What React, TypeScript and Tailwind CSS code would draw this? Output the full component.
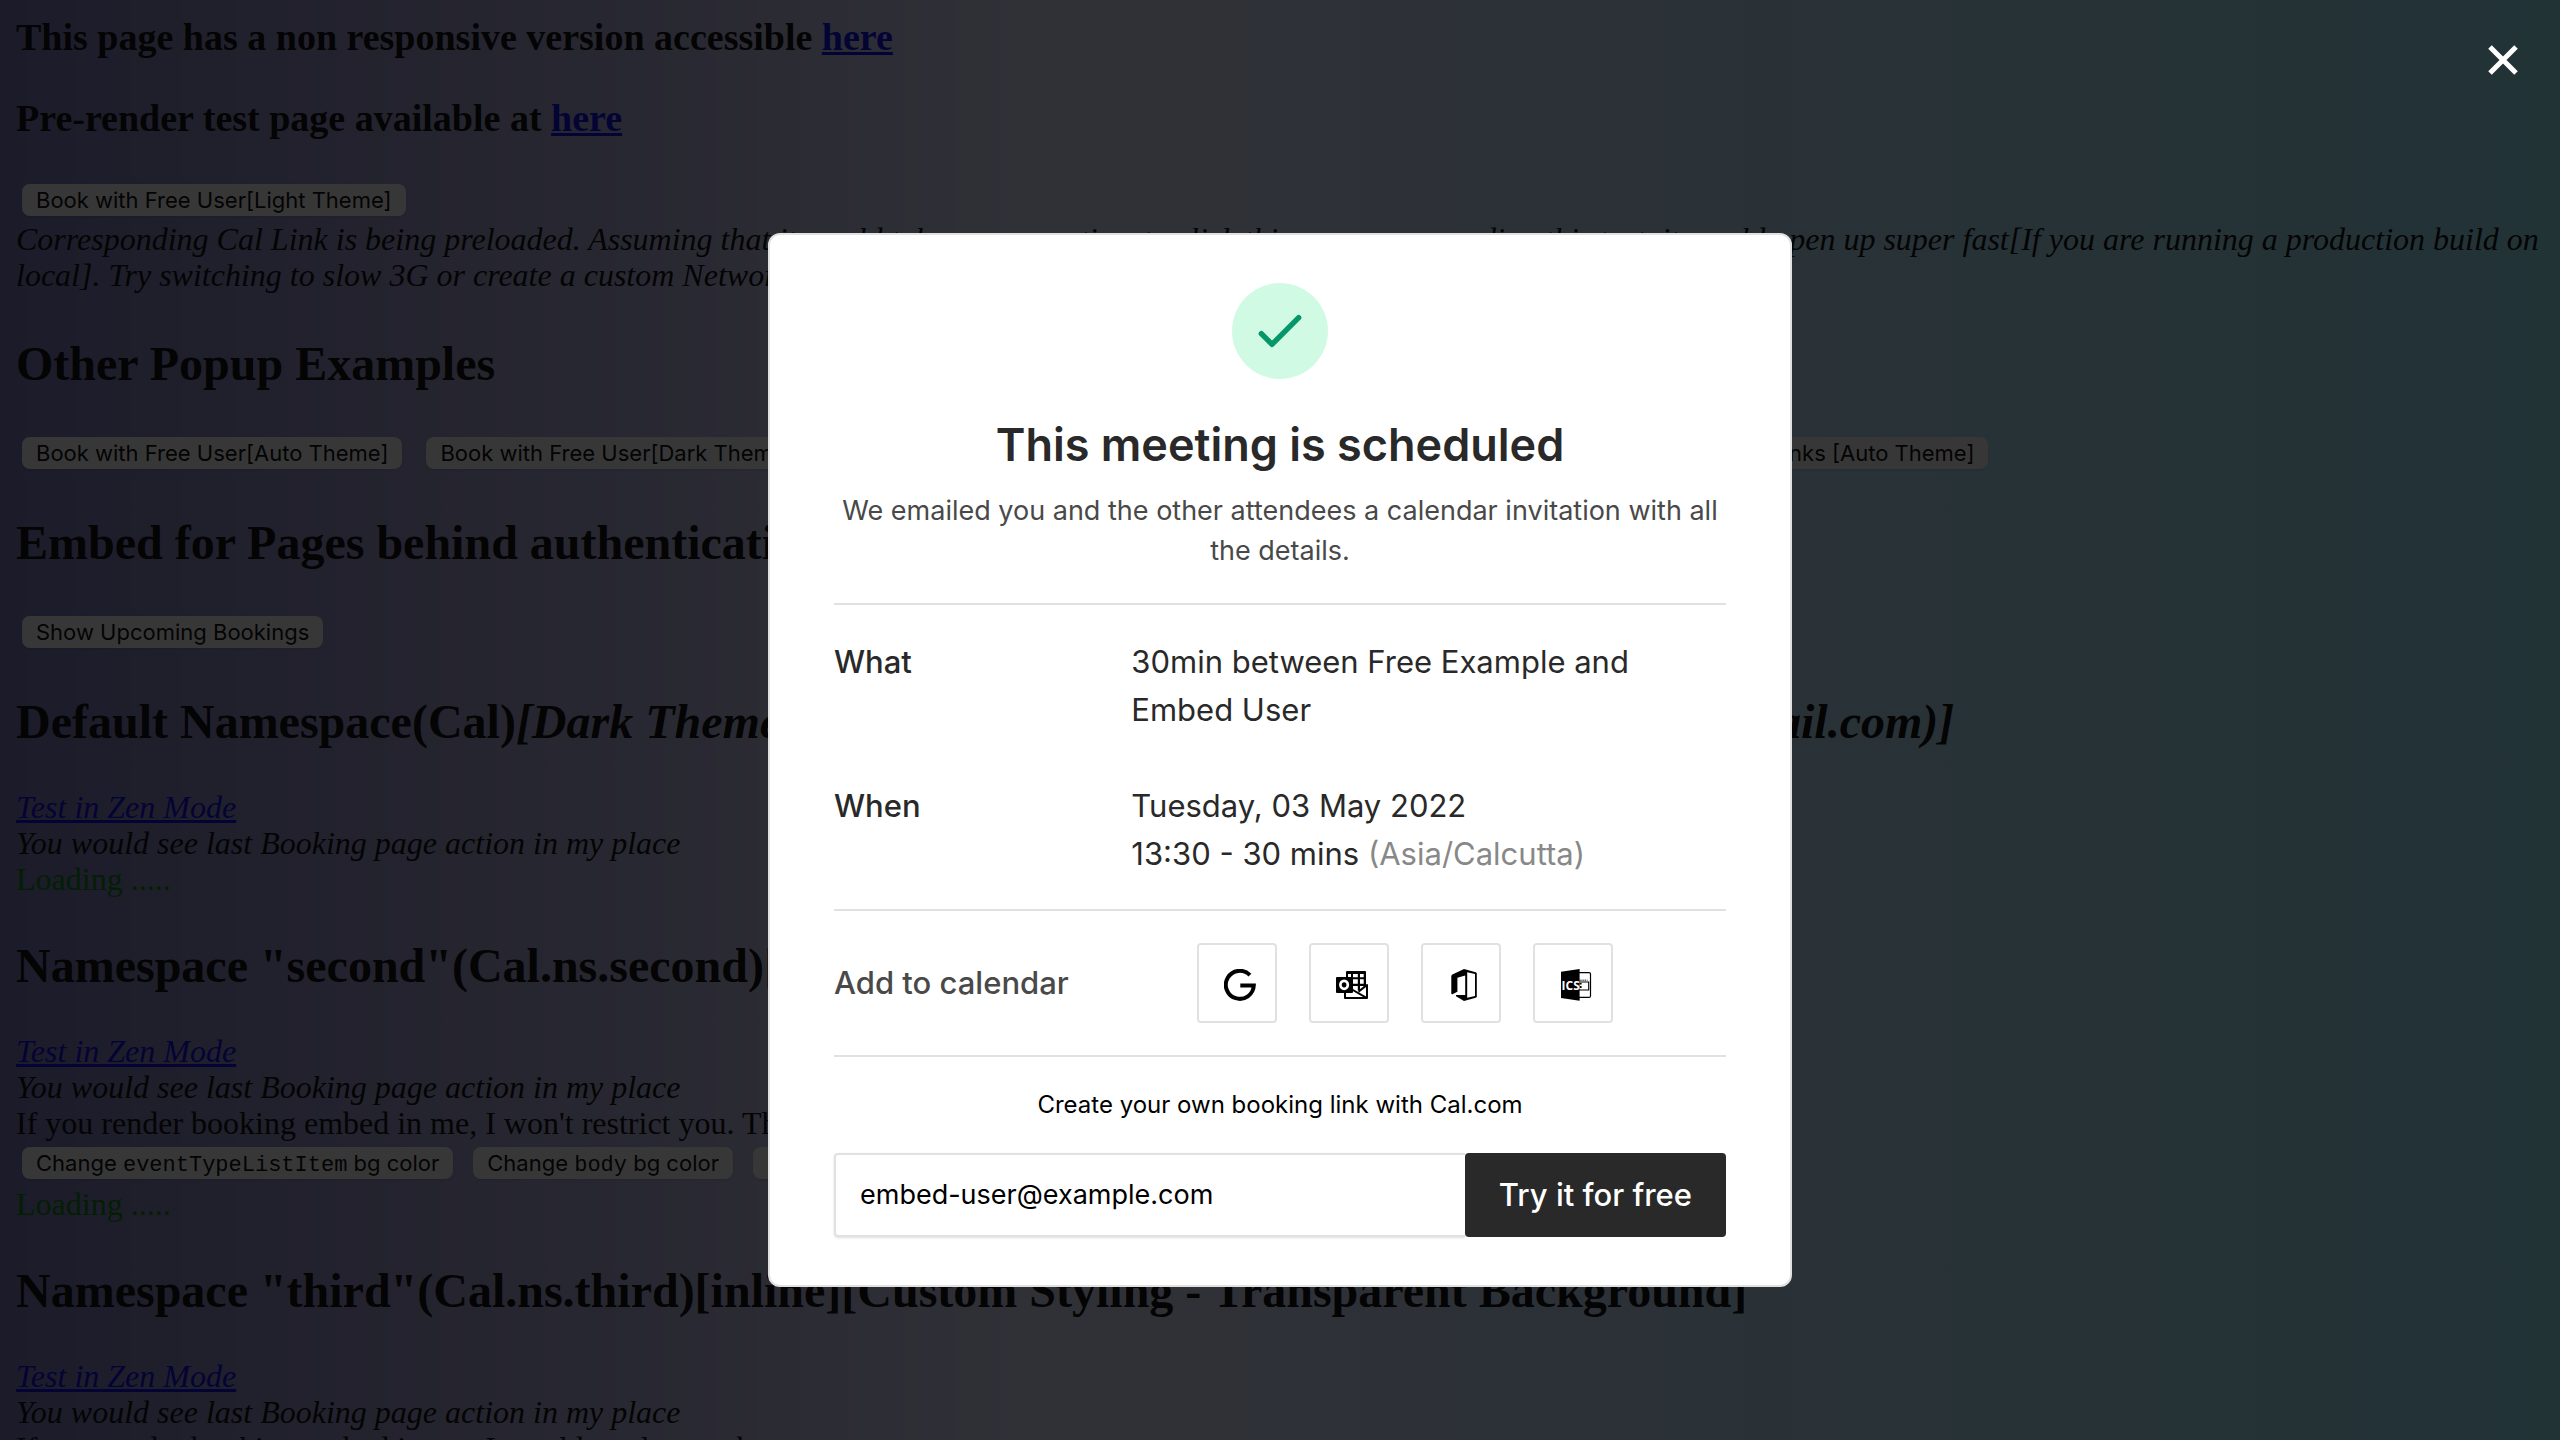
import React, { type ReactNode } from "react";

const ui = "font-['Inter',sans-serif]";

function PageButton({ children }: { children: ReactNode }) {
  return (
    <button
      type="button"
      className={`${ui} h-8 shrink-0 rounded-lg bg-white px-3.5 text-[22px] leading-8 whitespace-nowrap text-black shadow-sm`}
    >
      {children}
    </button>
  );
}

function ButtonRow({ children }: { children: ReactNode }) {
  return <div className="flex gap-5 overflow-hidden px-1.5 pt-1.5 pb-[7px]">{children}</div>;
}

function Mono({ children }: { children: ReactNode }) {
  return <code className="font-['Liberation_Mono',monospace] text-[22px]">{children}</code>;
}

function PageLink({ children }: { children: ReactNode }) {
  return (
    <a href="#" className="text-[#0000ee] underline">
      {children}
    </a>
  );
}

function Heading({ children }: { children: ReactNode }) {
  return <h2 className="my-10 text-[48px] leading-[54px] font-bold whitespace-nowrap">{children}</h2>;
}

function NamespaceIntro() {
  return (
    <>
      <div className="italic">
        <PageLink>Test in Zen Mode</PageLink>
      </div>
      <div className="italic">You would see last Booking page action in my place</div>
    </>
  );
}

function Loading() {
  return <div className="pb-0.5 text-[#008000]">Loading .....</div>;
}

function GoogleIcon() {
  return (
    <svg viewBox="0 0 32 32" className="size-8" aria-hidden="true">
      <path d="M25.9 6.1A14 14 0 1 0 29.8 16.5H16.3" fill="none" stroke="black" strokeWidth="4" />
    </svg>
  );
}

function OutlookIcon() {
  return (
    <svg viewBox="0 0 32 32" className="size-8" aria-hidden="true">
      <rect x="10" y="2" width="20" height="22" rx="1" />
      <g fill="white">
        <path d="M12 5h3v3h-3zM17 5h4.8v3.2H17zM24 5h3.7v3.2H24z" />
        <path d="M17 10.2h4.8v4.6H17zM24 10.2h3.7v4.6H24z" />
        <path d="M17 17h4.8v5H17zM24 17h3.7v4H24z" />
      </g>
      <path d="M9 24V29H31V16L22.5 21.5L17 20.5Z" fill="white" />
      <path d="M9 23V29H31V16L22.5 22.6M16 20.5L30.5 28.8" fill="none" stroke="black" strokeWidth="2" strokeLinejoin="round" />
      <rect x="0" y="8" width="17" height="16" rx="1" />
      <ellipse cx="8.1" cy="15.8" rx="3.7" ry="4" fill="none" stroke="white" strokeWidth="2.7" />
    </svg>
  );
}

function OfficeIcon() {
  return (
    <svg viewBox="0 0 32 32" className="size-8" aria-hidden="true">
      <path
        fillRule="evenodd"
        d="M16 0L27.7 3.2Q28.8 3.6 28.8 4.6V27.4Q28.8 28.4 27.7 28.8L16 32L8 27.2V26H17.2V6.6L9.4 8.8V22.8L4.4 25.2Q3.3 25.4 3.3 24.4V7.4Q3.3 6.2 4.4 5.6ZM19.2 3.2L27 5V27L19.2 28.8Z"
      />
    </svg>
  );
}

function IcsIcon() {
  return (
    <svg viewBox="0 0 32 32" className="size-8" aria-hidden="true">
      <rect x="17" y="3.6" width="13.5" height="24.8" rx="1.5" fill="none" stroke="black" strokeWidth="1.2" />
      <path d="M18 11.2H27.5" stroke="black" strokeWidth="1" strokeDasharray="1.4 0.8" />
      <path d="M18 13H28.7V21H18" fill="none" stroke="black" strokeWidth="1.1" />
      <path d="M1 2.7L19.6 0V31.8L1 29Z" />
      <path d="M19.6 14h2v1.4h-2zM19.6 17h2v2h-2z" />
      <text x="1.6" y="20.8" fill="white" fontFamily="Open Sans, sans-serif" fontWeight="700" fontSize="12">
        ICS
      </text>
    </svg>
  );
}

const calendars = [
  { name: "Google", icon: <GoogleIcon /> },
  { name: "Microsoft Outlook", icon: <OutlookIcon /> },
  { name: "Microsoft Office", icon: <OfficeIcon /> },
  { name: "ICS file", icon: <IcsIcon /> },
];

function DemoPage() {
  return (
    <main className="p-4 font-['Liberation_Serif',serif] text-[32px] leading-9 text-black">
      <h3 className="mb-[38px] text-[38px] leading-[43px] font-bold">
        This page has a non responsive version accessible <PageLink>here</PageLink>
      </h3>
      <h3 className="mb-[38px] text-[38px] leading-[43px] font-bold">
        Pre-render test page available at <PageLink>here</PageLink>
      </h3>
      <ButtonRow>
        <PageButton>Book with Free User[Light Theme]</PageButton>
      </ButtonRow>
      <p className="-mt-0.5 mb-11 italic">
        Corresponding Cal Link is being preloaded. Assuming that it would take you some time to click this as you are
        reading this text, it would open up super fast[If you are running a production build on local]. Try switching to
        slow 3G or create a custom Network configuration which is impossibly slow
      </p>
      <Heading>Other Popup Examples</Heading>
      <div className="flex gap-6 overflow-hidden px-1.5 pt-1.5 pb-[7px]">
        <PageButton>Book with Free User[Auto Theme]</PageButton>
        <PageButton>Book with Free User[Dark Theme]</PageButton>
        <PageButton>Book Team Event[Light Theme]</PageButton>
        <PageButton>Book Team Event[Dark Theme]</PageButton>
        <PageButton>Book with Team Links [Auto Theme]</PageButton>
      </div>
      <Heading>Embed for Pages behind authentication</Heading>
      <ButtonRow>
        <PageButton>Show Upcoming Bookings</PageButton>
      </ButtonRow>
      <Heading>
        Default Namespace(Cal)
        <i>[Dark Theme][inline][Guests(janedoe@gmail.com and test@gmail.com)]</i>
      </Heading>
      <NamespaceIntro />
      <Loading />
      <Heading>Namespace "second"(Cal.ns.second)[Custom Styling][inline]</Heading>
      <NamespaceIntro />
      <div>If you render booking embed in me, I won't restrict you. The entire page is yours.</div>
      <ButtonRow>
        <PageButton>
          Change <Mono>eventTypeListItem</Mono> bg color
        </PageButton>
        <PageButton>
          Change <Mono>body</Mono> bg color
        </PageButton>
        <PageButton>Change align</PageButton>
      </ButtonRow>
      <Loading />
      <Heading>Namespace "third"(Cal.ns.third)[inline][Custom Styling - Transparent Background]</Heading>
      <NamespaceIntro />
      <div className="w-[30%]">If you render booking embed in me, I would not let you be more than 30% wide</div>
    </main>
  );
}

function BookingDialog() {
  return (
    <section
      role="dialog"
      aria-modal="true"
      aria-labelledby="dialog-title"
      className={`${ui} w-full max-w-5xl rounded-xl border-2 border-[#e1e1e1] bg-white px-16 py-12 text-[31px] leading-[48px] text-[#292929]`}
    >
      <div className="mx-auto flex size-24 items-center justify-center rounded-full bg-[#d1fae5]">
        <svg viewBox="0 0 24 24" className="size-16" fill="none" stroke="#059669" strokeWidth="2" strokeLinecap="round" strokeLinejoin="round" aria-hidden="true">
          <path d="M5 13l4 4L19 7" />
        </svg>
      </div>
      <h1 id="dialog-title" className="mt-[34px] text-center text-[45px] leading-[64px] font-semibold">
        This meeting is scheduled
      </h1>
      <p className="mt-3.5 text-center text-[27px] leading-10 text-[#494949]">
        We emailed you and the other attendees a calendar invitation with all the details.
      </p>
      <dl className="mt-8 grid grid-cols-3 gap-y-12 border-y-2 border-[#e1e1e1] pt-[33px] pb-[31px]">
        <dt className="font-medium">What</dt>
        <dd className="col-span-2">
          30min between Free Example and
          <br />
          Embed User
        </dd>
        <dt className="font-medium">When</dt>
        <dd className="col-span-2">
          Tuesday, 03 May 2022
          <br />
          13:30 - 30 mins <span className="text-[#888888]">(Asia/Calcutta)</span>
        </dd>
      </dl>
      <div className="flex items-center border-b-2 border-[#e1e1e1] py-8">
        <span className="flex-1 font-medium text-[#494949]">Add to calendar</span>
        <div className="mr-[113px] flex gap-8">
          {calendars.map((c) => (
            <a
              key={c.name}
              href="#"
              aria-label={c.name}
              className="flex size-20 items-center justify-center rounded-sm border-2 border-[#e1e1e1] pt-1 pl-1.5"
            >
              {c.icon}
            </a>
          ))}
        </div>
      </div>
      <form onSubmit={(e) => e.preventDefault()}>
        <label htmlFor="email" className="my-8 block text-center text-[24px] leading-8 text-black">
          Create your own booking link with Cal.com
        </label>
        <div className="flex h-21">
          <input
            id="email"
            type="email"
            defaultValue="embed-user@example.com"
            className="min-w-0 flex-1 rounded-l-sm border-2 border-r-0 border-[#e1e1e1] px-6 text-[27px] text-black shadow-sm"
          />
          <button type="submit" className="rounded-sm bg-[#292929] px-[34px] font-medium text-white">
            Try it for free
          </button>
        </div>
      </form>
    </section>
  );
}

export default function App() {
  return (
    <div className="h-screen overflow-hidden bg-[linear-gradient(90deg,#7874ba_0%,#ddddff_41%,#94e8f9_100%)]">
      <DemoPage />
      <div className="fixed inset-0 flex items-start justify-center bg-[#050505cc] pt-[233px]">
        <BookingDialog />
        <button type="button" aria-label="Close" className="absolute top-11 right-[41px] text-white">
          <svg viewBox="0 0 32 32" className="size-8" stroke="currentColor" strokeWidth="5" aria-hidden="true">
            <path d="M3 3L29 29M29 3L3 29" />
          </svg>
        </button>
      </div>
    </div>
  );
}
